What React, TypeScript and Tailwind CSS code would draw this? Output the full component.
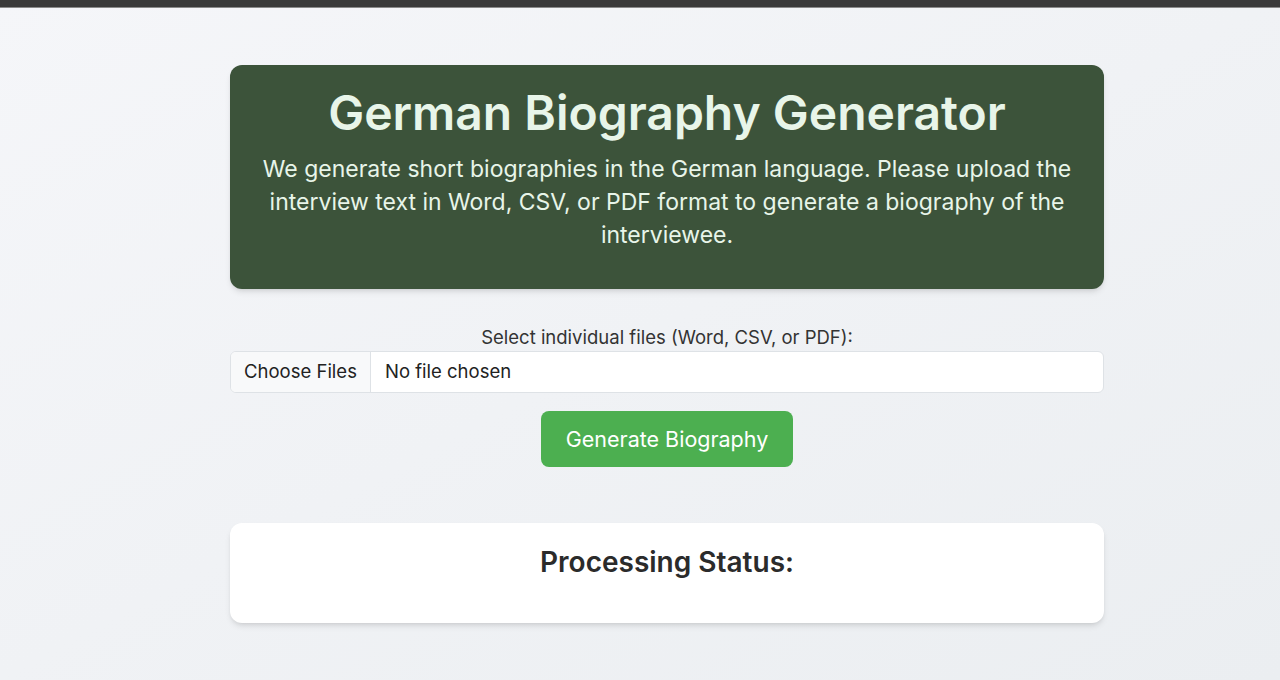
import React from 'react';

export default function App() {
  return (
    <div
      className="min-h-screen bg-gradient-to-br from-[#f5f6f9] to-[#ebeef1] text-[#333] pl-[54px]"
      style={{ fontFamily: 'Inter, "Noto Sans", sans-serif' }}
    >
      {/* top bar */}
      <div className="-ml-[54px] h-2 bg-[#3a3a3a] border-b border-[#8a8a8a]" />

      <main className="w-[874px] mx-auto pt-[57px]">
        {/* Header card */}
        <section className="bg-[#3c533a] rounded-xl shadow-md px-6 pt-[22px] pb-[37px] text-center text-[#e8f5e9]">
          <h1 className="text-[48px] font-semibold leading-[52px]">German Biography Generator</h1>
          <p className="mt-[14px] text-[23px] leading-[33px]">
            We generate short biographies in the German language. Please upload the interview text in Word, CSV, or
            PDF format to generate a biography of the interviewee.
          </p>
        </section>

        {/* Upload form */}
        <section className="mt-[36px] flex flex-col items-center">
          <label className="text-[18.5px] leading-6 text-[#333]">Select individual files (Word, CSV, or PDF):</label>
          <div className="mt-[2px] w-full h-[42px] flex bg-white border border-[#dee2e6] rounded-md overflow-hidden text-[18.5px] text-[#222]">
            <div className="w-[140px] flex items-center justify-center bg-[#f8f9fa] border-r border-[#dee2e6]">
              Choose Files
            </div>
            <div className="flex items-center pl-[14px]">No file chosen</div>
          </div>
          <button className="mt-[18px] w-[252px] h-[56px] rounded-lg bg-[#4caf50] text-white text-[21.5px]">
            Generate Biography
          </button>
        </section>

        {/* Status card */}
        <section className="mt-[56px] bg-white rounded-xl shadow-md h-[100px] pt-[22px] text-center">
          <h2 className="text-[28px] font-semibold leading-[34px] text-[#2b2b2b]">Processing Status:</h2>
        </section>
      </main>
    </div>
  );
}
